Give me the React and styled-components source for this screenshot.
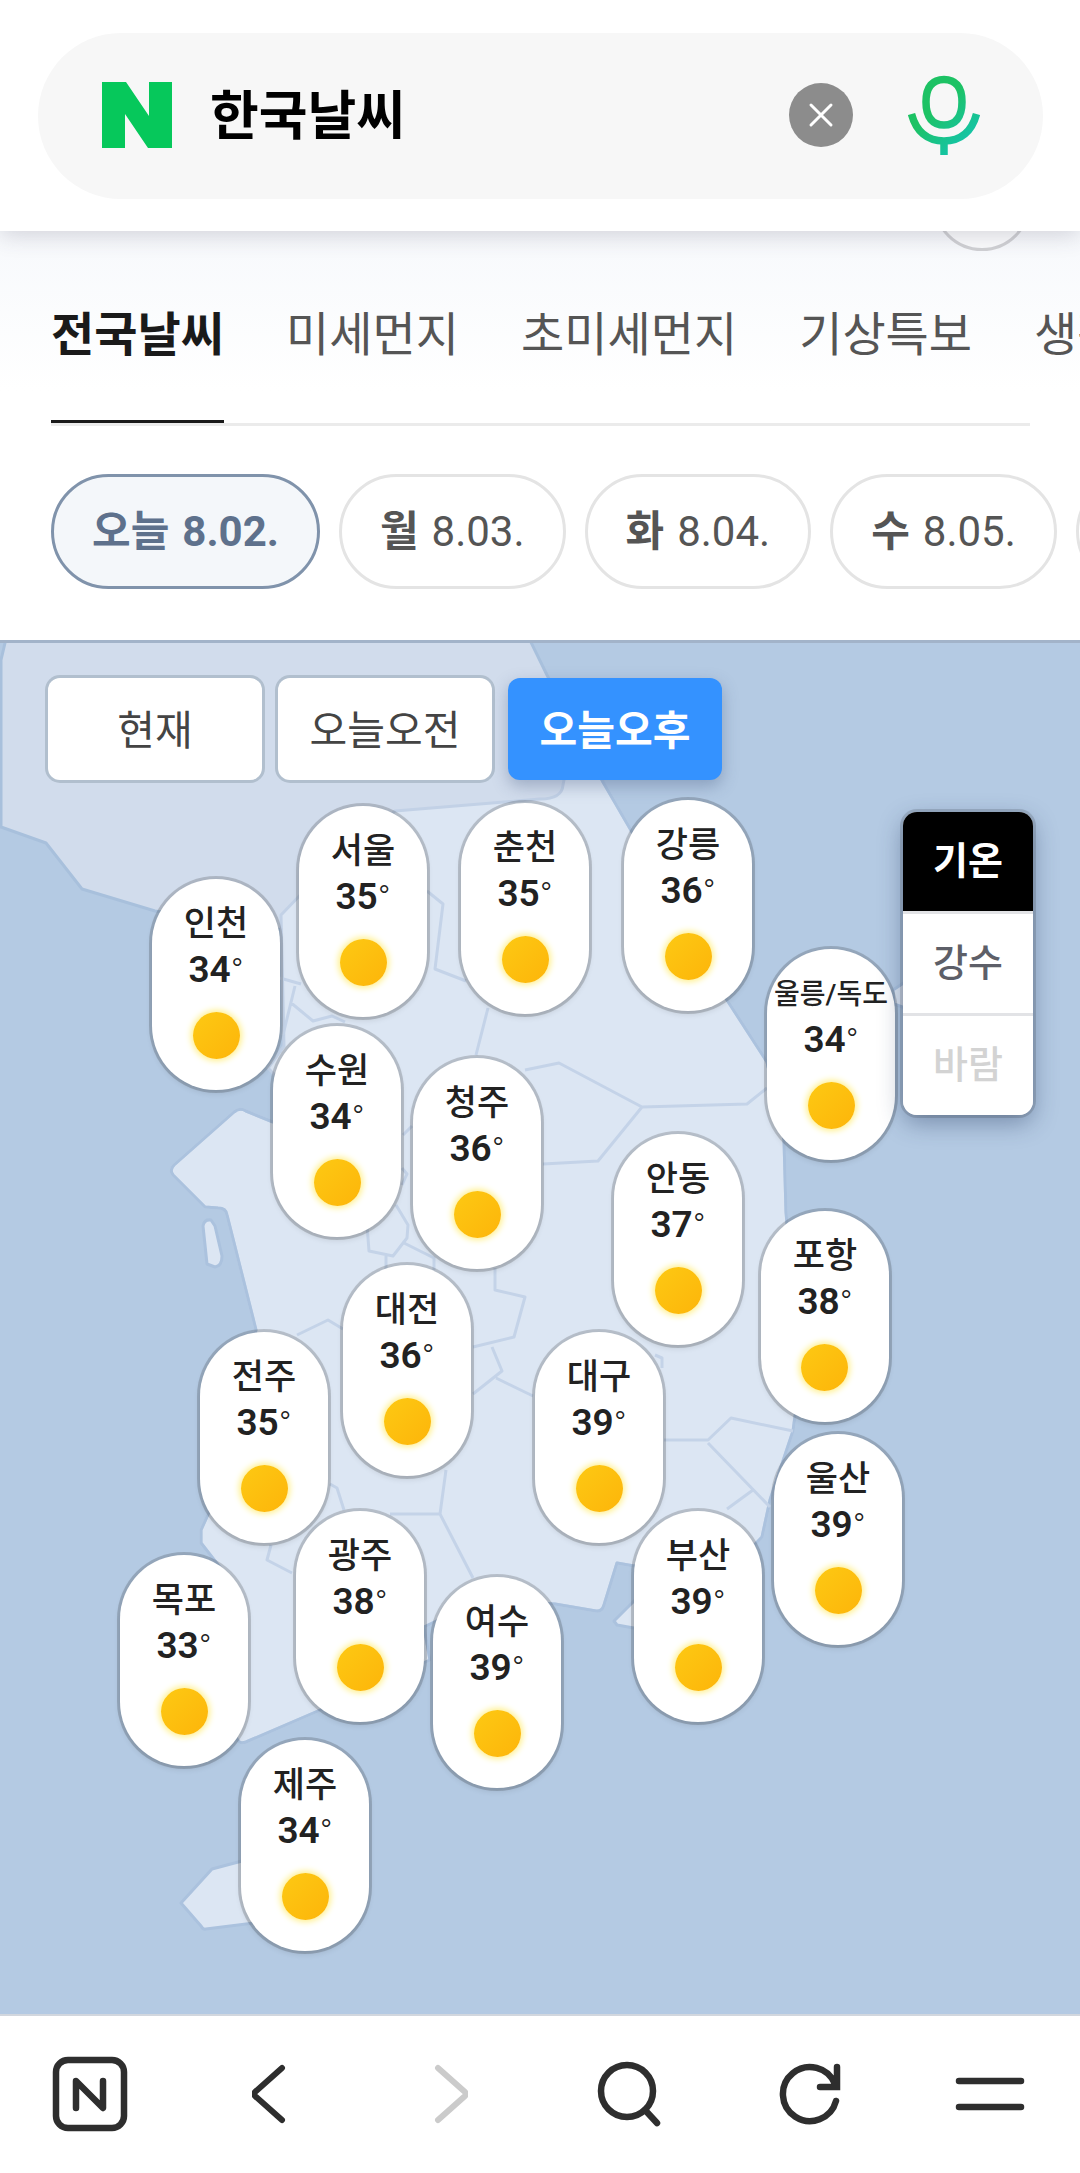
import React from 'react'
import styled, { createGlobalStyle } from 'styled-components'

const GlobalStyle = createGlobalStyle`
    * { box-sizing: border-box; }

    body {
        margin: 0;
        background: #fff;
        font-family: Roboto, 'Noto Sans CJK KR', sans-serif;
        color: #222;
    }

    button, input {
        font-family: inherit;
        margin: 0;
        padding: 0;
        border: 0;
        background: none;
    }
`

const Page = styled.div`
    min-height: 100vh;
    display: flex;
    flex-direction: column;
    overflow: hidden;
`

const Header = styled.header`
    position: relative;
    z-index: 3;
    padding: 33px 37px 32px 38px;
    background: #fff;
    box-shadow: 0 4px 22px rgba(60, 55, 80, 0.2);
`

const SearchBox = styled.form`
    height: 166px;
    display: flex;
    align-items: center;
    padding: 0 63px 3px 64px;
    border-radius: 83px;
    background: #f7f7f7;
`

const SearchInput = styled.input`
    flex: 1;
    min-width: 0;
    margin-left: 38px;
    padding-top: 4px;
    font-size: 53px;
    line-height: 76px;
    font-weight: 700;
    color: #000;
    outline: none;
`

const IconButton = styled.button`
    display: flex;
    align-items: center;
    justify-content: center;
    color: #2e2e2e;
`

const ClearButton = styled(IconButton)`
    width: 64px;
    height: 64px;
    margin-right: 55px;
    border-radius: 50%;
    background: #8c8c8c;
`

const Top = styled.section`
    position: relative;
    height: 409px;
    background: linear-gradient(#f7f9fc, #fff 160px);
`

// the round button that has scrolled under the header
const HiddenButton = styled.button`
    position: absolute;
    top: -78px;
    right: 49px;
    width: 98px;
    height: 98px;
    border: 3px solid #d0d1d4;
    border-radius: 50%;
    background: #fbfcfd;
`

const Tabs = styled.nav`
    display: flex;
    gap: 62px;
    height: 195px;
    margin: 0 50px 0 51px;
    border-bottom: 3px solid #ebebeb;
    white-space: nowrap;
`

const Tab = styled.a`
    flex: none;
    height: 192px;
    padding-top: 70px;
    font-size: 47px;
    line-height: 68px;
    text-decoration: none;
    color: ${p => (p.$active ? '#1a1a1a' : '#555')};
    font-weight: ${p => (p.$active ? 700 : 400)};
    border-bottom: ${p => (p.$active ? '3px solid #1a1a1a' : '0')};
`

const Days = styled.div`
    display: flex;
    gap: 19px;
    padding: 48px 0 0 51px;
`

const Day = styled.button`
    flex: none;
    display: flex;
    align-items: center;
    gap: 13px;
    height: 115px;
    padding: 0 38px;
    border: 3px solid ${p => (p.$active ? '#8093ab' : '#e4e4e4')};
    border-radius: 58px;
    background: ${p => (p.$active ? '#f4f7fa' : '#fff')};
    color: ${p => (p.$active ? '#5e718c' : '#555')};
    font-size: 42px;
    line-height: 50px;
    font-weight: ${p => (p.$active ? 700 : 400)};
    white-space: nowrap;

    b { font-weight: 700; }
`

const MapArea = styled.main`
    position: relative;
    flex: 1 0 1374px;
    background: #b4cae3;
    border-top: 3px solid #a2b3c9;
`

const MapDrawing = styled.svg`
    position: absolute;
    inset: 0;
    width: 100%;
    height: 1371px;
`

const Times = styled.div`
    position: relative;
    display: flex;
    gap: 16px;
    padding: 35px 0 0 48px;
`

const Time = styled.button`
    width: 214px;
    height: 102px;
    padding-bottom: 5px;
    border-radius: 12px;
    font-size: 41px;
    font-weight: ${p => (p.$active ? 700 : 400)};
    color: ${p => (p.$active ? '#fff' : '#444')};
    background: ${p => (p.$active ? '#3492ff' : '#fff')};
    box-shadow: ${p => (p.$active ? '0 6px 16px rgba(60, 80, 120, 0.35)' : '0 0 0 3px #b1bfce')};
`

const Modes = styled.div`
    position: absolute;
    top: 169px;
    right: 47px;
    width: 130px;
    display: flex;
    flex-direction: column;
    gap: 3px;
    border-radius: 14px;
    overflow: hidden;
    background: #e2e3e6;
    box-shadow: 0 0 0 3px rgba(0, 0, 0, 0.13), 0 8px 24px rgba(30, 50, 90, 0.4);
`

const Mode = styled.button`
    height: 99px;
    padding-bottom: 8px;
    font-size: 38px;
    font-weight: ${p => (p.$active ? 700 : 500)};
    color: ${p => (p.$active ? '#fff' : '#5d5f68')};
    background: ${p => (p.$active ? '#000' : '#fff')};

    &:disabled { color: #d3d3d3; }
`

const Pin = styled.a`
    position: absolute;
    width: 128px;
    height: 211px;
    display: flex;
    flex-direction: column;
    align-items: center;
    padding-top: 22px;
    border-radius: 64px;
    background: #fff;
    color: #222;
    text-decoration: none;
    box-shadow: 0 0 0 3px rgba(0, 0, 0, 0.17), 0 3px 6px rgba(0, 0, 0, 0.12);
`

const City = styled.span`
    font-size: ${p => (p.$long ? '28px' : '35px')};
    line-height: 48px;
    font-weight: 500;
    white-space: nowrap;
`

const Temp = styled.span`
    font-size: 37px;
    line-height: 42px;
    font-weight: 600;

    span { font-size: 34px; font-weight: 300; }
`

const Sun = styled.i`
    width: 47px;
    height: 47px;
    margin-top: 21px;
    border-radius: 50%;
    background: linear-gradient(135deg, #fdc913, #fdb50a);
    box-shadow: 0 0 6px 2px #fff08c;
`

const BottomBar = styled.nav`
    height: 159px;
    display: grid;
    grid-template-columns: repeat(6, 1fr);
    align-items: center;
    padding-bottom: 2px;
    border-top: 2px solid #d2d7de;
    background: #fff;
`

const cities = [
    { name: '서울', temp: 35, x: 299, y: 163 },
    { name: '춘천', temp: 35, x: 461, y: 160 },
    { name: '강릉', temp: 36, x: 624, y: 157 },
    { name: '인천', temp: 34, x: 152, y: 236 },
    { name: '울릉/독도', temp: 34, x: 767, y: 306 },
    { name: '수원', temp: 34, x: 273, y: 383 },
    { name: '청주', temp: 36, x: 413, y: 415 },
    { name: '안동', temp: 37, x: 614, y: 491 },
    { name: '포항', temp: 38, x: 761, y: 568 },
    { name: '대전', temp: 36, x: 343, y: 622 },
    { name: '전주', temp: 35, x: 200, y: 689 },
    { name: '대구', temp: 39, x: 535, y: 689 },
    { name: '울산', temp: 39, x: 774, y: 791 },
    { name: '광주', temp: 38, x: 296, y: 868 },
    { name: '부산', temp: 39, x: 634, y: 868 },
    { name: '목포', temp: 33, x: 120, y: 912 },
    { name: '여수', temp: 39, x: 433, y: 934 },
    { name: '제주', temp: 34, x: 241, y: 1097 },
]

const days = [
    ['오늘', '8.02.'],
    ['월', '8.03.'],
    ['화', '8.04.'],
    ['수', '8.05.'],
    ['목', '8.06.'],
]

const KoreaMap = () => (
    <MapDrawing viewBox="0 643 1080 1371" preserveAspectRatio="none" strokeLinejoin="round">
        {/* north */}
        <path fill="#d1dcec" stroke="#a8c0dc" strokeWidth="3" d="M8 630 1 660V827L46 843 82 889 155 911 283 930 420 820 610 795 547 675 525 630Z" />
        {/* mainland and islands */}
        <g fill="#dce6f3" stroke="#abc2de" strokeWidth="3">
            <path stroke="#c2d1e6" d="M281 915 305 890 395 811 540 799Q562 799 563 785L568 760 590 757 603 782 632 832 727 1000 767 1062 784 1140 786 1212 800 1380 793 1431 770 1500 762 1537 740 1560 634 1566 617 1563 604 1605Q602 1612 596 1611L555 1604 480 1600 424 1627 430 1660 318 1711 246 1742Q238 1745 236 1736L215 1650 222 1570 201 1543V1530L210 1510 256 1330 227 1215Q226 1208 218 1208L205 1207 173 1175Q169 1170 174 1165L234 1112Q240 1107 246 1111L273 1122 300 1100 268 1068 284 1046Z" />
            <path fill="none" d="M590 757 603 782 632 832 727 1000 767 1062 784 1140 786 1212 800 1380 793 1431 770 1500 762 1537 740 1560 634 1566 617 1563 604 1605Q602 1612 596 1611L555 1604 480 1600 424 1627 430 1660 318 1711 246 1742Q238 1745 236 1736L215 1650 222 1570 201 1543V1530L210 1510 256 1330 227 1215Q226 1208 218 1208L205 1207 173 1175Q169 1170 174 1165L234 1112Q240 1107 246 1111L273 1122" />
            <path d="M203 1226Q204 1219 211 1220L215 1226 222 1256Q222 1266 215 1267L207 1264Z" />
            <path d="M181 1903 212 1869 242 1861 340 1870 320 1915 206 1929Q203 1930 201 1926Z" />
            <path d="M614 1621 645 1590V1630L617 1625Z" />
            <path d="M893 990 905 982V1008L894 1004Z" />
        </g>
        {/* province borders */}
        <path fill="none" stroke="#c4d3e8" strokeWidth="3" d="M427 891 443 904 435 969 466 981M488 1008 476 1055M525 1070 559 1063 642 1107 598 1161 543 1164M642 1107 747 1104 767 1088M280 978 301 984M295 986 283 1035M290 1002 313 1021 332 1016 345 1022M403 1135 412 1126M402 1168 407 1174 402 1185M396 1205 408 1225 407 1238 393 1256 369 1251 367 1225M402 1242 434 1258V1270M386 1270V1256M495 1268V1290L525 1297 514 1337 473 1347M492 1347 502 1371 473 1394M496 1378 533 1396M446 1470 440 1514H390M440 1514 473 1578M655 1355 662 1358V1368M664 1440H708L731 1418 793 1431M708 1443 770 1507M753 1490 727 1509M297 1335 328 1320 343 1329M330 1484 337 1488 344 1510M271 1545 267 1560 292 1573" />
    </MapDrawing>
)

const App = () => {
    return (
        <Page>
            <GlobalStyle />
            <Header>
                <SearchBox onSubmit={e => e.preventDefault()}>
                    <svg width="70" height="66" viewBox="0 0 70 66" role="img" aria-label="N">
                        <path fill="#06c85b" d="M0 0H24L47 34V0H70V66H46L23 32V66H0Z" />
                    </svg>
                    <SearchInput aria-label="검색어" defaultValue="한국날씨" />
                    <ClearButton type="button" aria-label="지우기">
                        <svg width="26" height="26" viewBox="0 0 26 26" stroke="#fff" strokeWidth="3" strokeLinecap="round">
                            <path d="M3 3 23 23M23 3 3 23" />
                        </svg>
                    </ClearButton>
                    <IconButton type="button" aria-label="음성 검색">
                        <svg width="72" height="80" viewBox="0 0 72 80" fill="none" stroke="url(#mic)">
                            <defs>
                                <linearGradient id="mic" x1="0" y1="0" x2="72" y2="80" gradientUnits="userSpaceOnUse">
                                    <stop offset="0.4" stopColor="#1dc264" />
                                    <stop offset="0.85" stopColor="#14c4ac" />
                                </linearGradient>
                            </defs>
                            <path strokeWidth="7.5" d="M36 4.500C47 4.500 54 11 54 27C54 43 47 50 36 50C25 50 18 43 18 27C18 11 25 4.500 36 4.500Z" />
                            <path strokeWidth="7.5" d="M3.500 39C8 56 19 66 36 66C53 66 64 56 68.500 39M36 66V80" />
                        </svg>
                    </IconButton>
                </SearchBox>
            </Header>

            <Top>
                <HiddenButton type="button" aria-label="더보기" />
                <Tabs>
                    <Tab href="#all" $active>전국날씨</Tab>
                    <Tab href="#dust">미세먼지</Tab>
                    <Tab href="#finedust">초미세먼지</Tab>
                    <Tab href="#alert">기상특보</Tab>
                    <Tab href="#life">생활지수</Tab>
                </Tabs>
                <Days>
                    {days.map(([day, date], i) => (
                        <Day key={date} type="button" $active={i === 0}><b>{day}</b><span>{date}</span></Day>
                    ))}
                </Days>
            </Top>

            <MapArea>
                <KoreaMap />
                <Times>
                    <Time type="button">현재</Time>
                    <Time type="button">오늘오전</Time>
                    <Time type="button" $active>오늘오후</Time>
                </Times>
                {cities.map(city => (
                    <Pin key={city.name} href="#city" style={{ left: `${city.x / 10.8}%`, top: city.y }}>
                        <City $long={city.name.length > 2}>{city.name}</City>
                        <Temp>{city.temp}<span>°</span></Temp>
                        <Sun />
                    </Pin>
                ))}
                <Modes>
                    <Mode type="button" $active>기온</Mode>
                    <Mode type="button">강수</Mode>
                    <Mode type="button" disabled>바람</Mode>
                </Modes>
            </MapArea>

            <BottomBar>
                <IconButton type="button" aria-label="홈">
                    <svg width="76" height="76" viewBox="0 0 76 76" fill="none" stroke="currentColor" strokeLinecap="round" strokeLinejoin="round">
                        <rect x="4" y="4" width="68" height="68" rx="12" strokeWidth="6.5" />
                        <path strokeWidth="6.5" d="M24 52V25L51 52V25" />
                    </svg>
                </IconButton>
                <IconButton type="button" aria-label="뒤로">
                    <svg width="36" height="60" viewBox="0 0 36 60" fill="none" stroke="currentColor" strokeWidth="6" strokeLinecap="round" strokeLinejoin="round">
                        <path d="M30 4 3 28Q1 30 3 32L30 56" />
                    </svg>
                </IconButton>
                <IconButton type="button" aria-label="앞으로" disabled>
                    <svg width="36" height="60" viewBox="0 0 36 60" fill="none" stroke="#cbcbcb" strokeWidth="6" strokeLinecap="round" strokeLinejoin="round">
                        <path d="M6 4 33 28Q35 30 33 32L6 56" />
                    </svg>
                </IconButton>
                <IconButton type="button" aria-label="검색">
                    <svg width="66" height="66" viewBox="0 0 66 66" fill="none" stroke="currentColor" strokeWidth="6.5" strokeLinecap="round">
                        <circle cx="30" cy="30" r="26" />
                        <path d="M48 49 60 62" />
                    </svg>
                </IconButton>
                <IconButton type="button" aria-label="새로고침">
                    <svg width="64" height="64" viewBox="0 0 64 64" fill="none" stroke="currentColor" strokeWidth="6.5" strokeLinecap="round">
                        <path d="M58 39A27 27 0 1 1 57 22M59 5V25H42" />
                    </svg>
                </IconButton>
                <IconButton type="button" aria-label="메뉴">
                    <svg width="70" height="34" viewBox="0 0 70 34" stroke="currentColor" strokeWidth="6.5" strokeLinecap="round">
                        <path d="M4 4H66M4 30H66" />
                    </svg>
                </IconButton>
            </BottomBar>
        </Page>
    )
}

export default App
